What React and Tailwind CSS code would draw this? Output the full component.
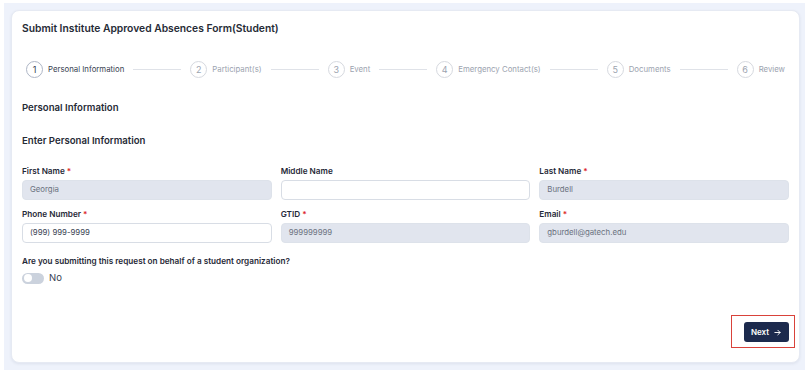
import React from "react";

const steps = [
  "Personal Information",
  "Participant(s)",
  "Event",
  "Emergency Contact(s)",
  "Documents",
  "Review",
];

function Field({ label, required, value, disabled }) {
  return (
    <div className="flex flex-col">
      <div className="text-[8.2px] leading-[12px] font-semibold text-[#1f2937] mb-[3px]">
        {label}
        {required && <span className="text-[#dc2626]"> *</span>}
      </div>
      <div
        className={
          "h-[20px] rounded-[4px] border flex items-center px-[7px] text-[7.8px] " +
          (disabled
            ? "bg-[#e1e5ee] border-[#dde2ea] text-[#6b7280]"
            : "bg-white border-[#d8dde5] text-[#374151]")
        }
      >
        {value}
      </div>
    </div>
  );
}

export default function App() {
  return (
    <div
      className="w-[811px] h-[380px] bg-white pl-[4px] pr-[6px] pt-[3px] pb-[10px]"
      style={{ fontFamily: "Inter, 'Noto Sans', sans-serif" }}
    >
      <div className="h-full bg-[#eef2fb] pl-[7px] pr-[5px] pt-[7px] pb-[7px]">
        <div className="h-full bg-white rounded-[8px] border border-[#e6eaf3] shadow-[0_1px_3px_rgba(30,40,80,0.08)] px-[10px] pt-[9px] pb-[20px] flex flex-col">
          <div className="text-[10.3px] leading-[16px] font-semibold text-[#262b36]">
            Submit Institute Approved Absences Form(Student)
          </div>

          <div className="mt-[25px] flex items-center px-[4px]">
            {steps.map((s, i) => (
              <React.Fragment key={s}>
                {i > 0 && <div className="flex-1 h-px bg-[#dfe2e8] mx-[9px]" />}
                <div className="flex items-center gap-[5px]">
                  <div
                    className={
                      "w-[17px] h-[17px] rounded-full border flex items-center justify-center text-[9px] " +
                      (i === 0
                        ? "border-[#aeb6c6] text-[#374151]"
                        : "border-[#d6d9df] text-[#9ca3af]")
                    }
                  >
                    {i + 1}
                  </div>
                  <div
                    className={
                      "text-[7.8px] whitespace-nowrap " +
                      (i === 0 ? "text-[#374151]" : "text-[#9ca3af]")
                    }
                  >
                    {s}
                  </div>
                </div>
              </React.Fragment>
            ))}
          </div>

          <div className="mt-[23px] text-[9.6px] leading-[14px] font-semibold text-[#262b36]">
            Personal Information
          </div>
          <div className="mt-[19px] text-[9.6px] leading-[14px] font-semibold text-[#262b36]">
            Enter Personal Information
          </div>

          <div className="mt-[17px] grid grid-cols-3 gap-x-[9px] gap-y-[8px]">
            <Field label="First Name" required value="Georgia" disabled />
            <Field label="Middle Name" value="" />
            <Field label="Last Name" required value="Burdell" disabled />
            <Field label="Phone Number" required value="(999) 999-9999" />
            <Field label="GTID" required value="999999999" disabled />
            <Field label="Email" required value="gburdell@gatech.edu" disabled />
          </div>

          <div className="mt-[12px] text-[8.2px] leading-[12px] font-semibold text-[#1f2937]">
            Are you submitting this request on behalf of a student organization?
          </div>
          <div className="mt-[4px] flex items-center gap-[5px] h-[14px]">
            <div className="w-[22px] h-[11px] rounded-full bg-[#cbd2dd] flex items-center p-[1.5px]">
              <div className="w-[8px] h-[8px] rounded-full bg-white" />
            </div>
            <div className="text-[9.5px] text-[#374151]">No</div>
          </div>

          <div className="flex-1" />
          <div className="flex justify-end">
            <div className="relative">
              <div className="absolute -left-[13px] -top-[7px] -right-[6px] -bottom-[6px] border border-[#d9423a]" />
              <div className="h-[20px] w-[45px] rounded-[3px] bg-[#1c2a4d] text-white text-[8px] font-semibold flex items-center justify-center gap-[4px]">
                Next
                <svg width="9" height="9" viewBox="0 0 24 24" fill="none" stroke="white" strokeWidth="2.5" strokeLinecap="round" strokeLinejoin="round">
                  <path d="M5 12h14" />
                  <path d="M13 6l6 6-6 6" />
                </svg>
              </div>
            </div>
          </div>
        </div>
      </div>
    </div>
  );
}
